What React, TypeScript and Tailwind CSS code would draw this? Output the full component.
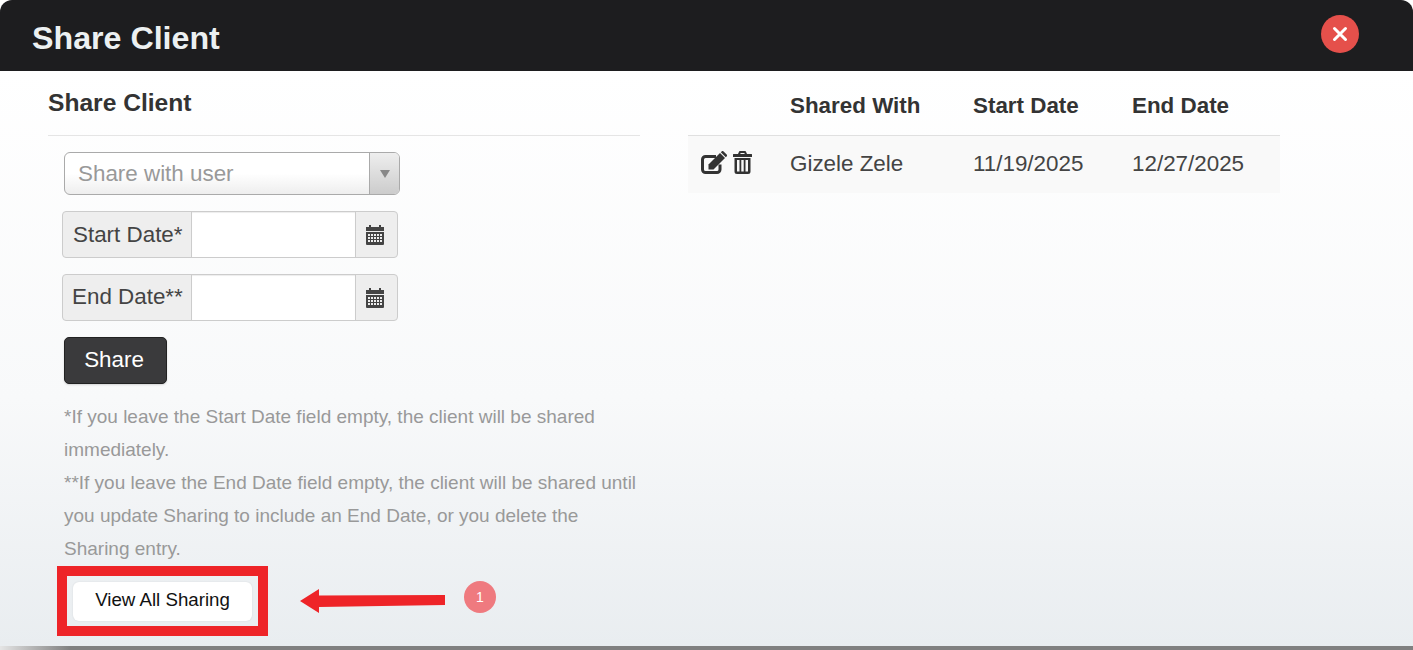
function CalendarIcon() {
  return (
    <svg width="18" height="20" viewBox="0 0 18 20" className="text-[#444]">
      <path fill="currentColor" d="M3 0h2v2h8V0h2v2h3v4H0V2h3z" />
      <path
        fill="currentColor"
        fillRule="evenodd"
        d="M0 7h18v12a1 1 0 0 1-1 1H1a1 1 0 0 1-1-1zM2 9v2h2V9zm3 0v2h2V9zm3 0v2h2V9zm3 0v2h2V9zm3 0v2h2V9zM2 12v2h2v-2zm3 0v2h2v-2zm3 0v2h2v-2zm3 0v2h2v-2zm3 0v2h2v-2zM2 15v2h2v-2zm3 0v2h2v-2zm3 0v2h2v-2zm3 0v2h2v-2zm3 0v2h2v-2z"
      />
    </svg>
  );
}

function EditIcon() {
  return (
    <svg width="26" height="23" viewBox="0 0 26 23" className="text-[#333]">
      <path
        d="M15 5.500H4.500a3 3 0 0 0-3 3V18.500a3 3 0 0 0 3 3H16a3 3 0 0 0 3-3v-5"
        fill="none"
        stroke="currentColor"
        strokeWidth="3"
      />
      <path fill="currentColor" d="M7.500 13.500L19 2l5 5-11.500 11.500h-5z" />
      <path fill="currentColor" d="M19.800 1.200l.8-.8a1.500 1.500 0 0 1 2 0l3 3a1.500 1.500 0 0 1 0 2l-.8.800z" />
    </svg>
  );
}

function TrashIcon() {
  return (
    <svg width="19" height="23" viewBox="0 0 19 23" className="text-[#333]">
      <path fill="currentColor" d="M5 3l1-2.200A1 1 0 0 1 7 0h5a1 1 0 0 1 1 .8L14 3h4.500a.5.500 0 0 1 .5.500V6H0V3.500A.5.500 0 0 1 .5 3zm2.200 0h4.600l-.5-1H7.700z" fillRule="evenodd" />
      <path
        fill="currentColor"
        fillRule="evenodd"
        d="M1.500 7h16v13.500a2.500 2.500 0 0 1-2.500 2.500H4a2.500 2.500 0 0 1-2.500-2.500zM4 9v11.500h2.500V9zm4.300 0v11.500h2.400V9zm4.200 0v11.500H15V9z"
      />
    </svg>
  );
}

function DateField({ label, labelClass }: { label: string; labelClass: string }) {
  return (
    <div className="flex h-[47px] w-[336px] rounded-[4px] border border-[#ccc] bg-[#eee] text-[22.4px] text-[#444]">
      <div className={`flex w-[128px] shrink-0 items-center whitespace-nowrap ${labelClass}`}>{label}</div>
      <div className="w-[165px] border-x border-[#ccc] bg-white shadow-[inset_0_1px_1px_rgba(0,0,0,0.075)]" />
      <div className="flex flex-1 items-center justify-center pr-[3px]">
        <CalendarIcon />
      </div>
    </div>
  );
}

export default function App() {
  return (
    <div className="h-[650px] w-[1413px] overflow-hidden bg-white font-['Liberation_Sans',Arial,sans-serif] text-[#333]">
      {/* Modal header */}
      <div className="flex h-[71px] items-center justify-between rounded-t-[12px] bg-[#1d1d1f] pl-8 pr-[54px]">
        <h1 className="mt-1 text-[32.2px] leading-[40px] font-bold text-[#ecf0f1]">Share Client</h1>
        <button className="mb-[3px] flex h-[38px] w-[38px] items-center justify-center rounded-full bg-[#e5504b]">
          <svg width="16" height="16" viewBox="0 0 16 16">
            <path d="M2.500 2.500l11 11M13.500 2.500l-11 11" stroke="#fff" strokeWidth="3" strokeLinecap="round" />
          </svg>
        </button>
      </div>

      {/* Modal body */}
      <div className="relative flex h-[575px] gap-12 bg-gradient-to-b from-white via-[#f8f9fa] via-[57%] to-[#e9edf0] pl-12">
        <div className="w-[592px]">
          <h3 className="h-[65px] border-b border-[#e5e5e5] pt-[14px] text-[24.6px] leading-[36px] font-bold">Share Client</h3>

          <div className="mt-4 ml-4 flex h-[43px] w-[336px] rounded-[6px] border border-[#aaa] bg-gradient-to-b from-white from-50% to-[#eeeeee]">
            <div className="flex flex-1 items-center pl-[13px] text-[22.4px] text-[#999]">Share with user</div>
            <div className="flex w-[30px] items-center justify-center rounded-r-[5px] border-l border-[#aaa] bg-gradient-to-b from-[#eeeeee] to-[#cccccc]">
              <div className="mt-px h-0 w-0 border-x-[5px] border-t-[8px] border-x-transparent border-t-[#888]" />
            </div>
          </div>

          <div className="mt-4 ml-[14px] flex flex-col gap-4">
            <DateField label="Start Date*" labelClass="pl-[10px]" />
            <DateField label="End Date**" labelClass="pb-[2px] pl-[9px]" />
          </div>

          <button className="mt-4 ml-4 block h-[47px] w-[103px] rounded-[5px] border border-[#222] bg-[#3a3a3c] pr-[3px] pb-[2px] text-[22.4px] text-white shadow-[0_1px_2px_rgba(0,0,0,0.15)]">
            Share
          </button>

          <p className="mt-[16px] ml-4 w-[576px] text-[19px] leading-[33px] text-[#999]">
            *If you leave the Start Date field empty, the client will be shared immediately.
            <br />
            **If you leave the End Date field empty, the client will be shared until you update Sharing to include an End Date, or you delete the Sharing entry.
          </p>

          <button className="mt-[17px] ml-[25px] block h-[39px] w-[179px] rounded-[6px] bg-white pb-[2px] text-[18.7px] text-[#111] shadow-[0_0_2px_rgba(0,0,0,0.1)]">
            View All Sharing
          </button>
        </div>

        <table className="h-fit w-[592px] table-fixed border-collapse text-left text-[22.4px]">
          <colgroup>
            <col className="w-[90px]" />
            <col className="w-[183px]" />
            <col className="w-[159px]" />
            <col className="w-[160px]" />
          </colgroup>
          <thead>
            <tr className="h-[64px] border-b border-[#e0e0e0]">
              <th />
              <th className="px-3 pt-[7px] font-bold">Shared With</th>
              <th className="px-3 pt-[7px] font-bold">Start Date</th>
              <th className="px-3 pt-[7px] font-bold">End Date</th>
            </tr>
          </thead>
          <tbody>
            <tr className="h-[58px] bg-[#f9f9f9] text-[#444]">
              <td className="pb-[3px] pl-[13px]">
                <div className="flex items-center gap-[6px]">
                  <EditIcon />
                  <TrashIcon />
                </div>
              </td>
              <td className="px-3 pb-[1px]">Gizele Zele</td>
              <td className="px-3 pb-[1px]">11/19/2025</td>
              <td className="px-3 pb-[1px]">12/27/2025</td>
            </tr>
          </tbody>
        </table>

        {/* Annotation overlays */}
        <div className="absolute top-[495px] left-[57px] h-[70px] w-[211px] border-[10px] border-[#ee2428]" />
        <svg className="absolute top-[513px] left-[300px]" width="146" height="32" viewBox="0 0 146 32">
          <path fill="#ee2428" d="M0 17L19 5v6.500L145 11v10L19 23v6z" />
        </svg>
        <div className="absolute top-[510px] left-[464px] flex h-8 w-8 items-center justify-center rounded-full bg-[#ef7a7f] text-[14px] text-white">
          1
        </div>
      </div>

      {/* Page behind the modal */}
      <div className="h-1 bg-gradient-to-r from-[#e5e5e5] via-[#808080] via-[5%] to-[#808080]" />
    </div>
  );
}
